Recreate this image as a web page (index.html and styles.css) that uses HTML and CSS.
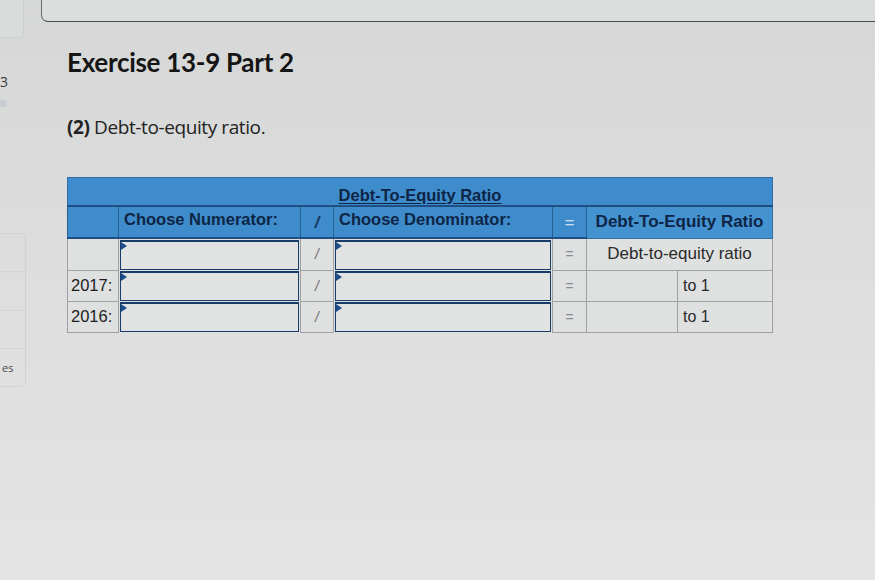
FILE: index.html
```html
<!DOCTYPE html>
<html>
<head>
<meta charset="utf-8">
<link rel="stylesheet" href="styles.css">
</head>
<body>
<div class="page">
  <aside class="sidebar">
    <div class="side-card-top"></div>
    <div class="side-num">3</div>
    <div class="side-pill"></div>
    <div class="side-card">
      <div class="side-row"></div>
      <div class="side-row"></div>
      <div class="side-row"></div>
      <div class="side-row last"><span>es</span></div>
    </div>
  </aside>
  <main class="main">
    <div class="topbox"></div>
    <div class="content">
      <h1 class="title">Exercise 13-9 Part 2</h1>
      <p class="question"><b>(2)</b> Debt-to-equity ratio.</p>
      <table class="ratio">
        <colgroup>
          <col class="c-label"><col class="c-num"><col class="c-slash"><col class="c-den"><col class="c-eq"><col class="c-res1"><col class="c-res2">
        </colgroup>
        <tr class="h1">
          <th colspan="7"><span class="ul">Debt-To-Equity Ratio</span></th>
        </tr>
        <tr class="h2">
          <th class="blank"></th>
          <th class="left">Choose Numerator:</th>
          <th class="op">/</th>
          <th class="left">Choose Denominator:</th>
          <th class="op eq">=</th>
          <th colspan="2" class="res-head">Debt-To-Equity Ratio</th>
        </tr>
        <tr class="row">
          <td class="label"></td>
          <td class="in"><div class="box"></div></td>
          <td class="op">/</td>
          <td class="in"><div class="box"></div></td>
          <td class="op eq">=</td>
          <td colspan="2" class="res-text">Debt-to-equity ratio</td>
        </tr>
        <tr class="row">
          <td class="label">2017:</td>
          <td class="in"><div class="box"></div></td>
          <td class="op">/</td>
          <td class="in"><div class="box"></div></td>
          <td class="op eq">=</td>
          <td class="res1"></td>
          <td class="res2">to 1</td>
        </tr>
        <tr class="row">
          <td class="label">2016:</td>
          <td class="in"><div class="box"></div></td>
          <td class="op">/</td>
          <td class="in"><div class="box"></div></td>
          <td class="op eq">=</td>
          <td class="res1"></td>
          <td class="res2">to 1</td>
        </tr>
      </table>
    </div>
  </main>
</div>
</body>
</html>
```

FILE: styles.css
```css
html, body {
  margin: 0;
  padding: 0;
}
body {
  width: 875px;
  height: 580px;
  overflow: hidden;
  background: linear-gradient(180deg, #d6d8d7 0%, #dcdddc 45%, #e3e4e3 100%);
  font-family: "Liberation Sans", Arial, sans-serif;
  color: #1c1c1c;
}
.page {
  display: flex;
  height: 580px;
}
.sidebar {
  width: 26px;
  flex: none;
  overflow: hidden;
  display: flex;
  flex-direction: column;
}
.side-card-top {
  width: 28px;
  height: 40px;
  margin-left: -6px;
  margin-top: -4px;
  border: 1px solid #cfd1d0;
  border-radius: 5px;
  background: #dadcdb;
}
.side-num {
  margin-top: 36px;
  margin-left: 0;
  font-family: "Open Sans", sans-serif;
  font-size: 14px;
  color: #3a3a3a;
  line-height: 16px;
}
.side-pill {
  margin-top: 10px;
  width: 10px;
  height: 7px;
  margin-left: -3px;
  border-radius: 4px;
  background: #c8ccd0;
}
.side-card {
  margin-top: 126px;
  margin-left: -6px;
  width: 30px;
  height: 152px;
  border: 1px solid #d0d2d1;
  border-radius: 5px;
  display: flex;
  flex-direction: column;
}
.side-row {
  flex: 1;
  border-bottom: 1px solid #d3d5d4;
}
.side-row.last {
  border-bottom: none;
  display: flex;
  align-items: center;
  font-family: "Open Sans", sans-serif;
  font-size: 11px;
  color: #4a4a4a;
  padding-left: 7px;
}
.main {
  flex: 1;
  padding-left: 15px;
  min-width: 0;
}
.topbox {
  height: 23px;
  margin-top: -2px;
  margin-right: -20px;
  border-left: 1.5px solid #6a6c6c;
  border-bottom: 1.5px solid #4c4e4e;
  border-bottom-left-radius: 7px;
  background: #dcdedd;
}
.content {
  padding-left: 26px;
}
.title {
  margin: 25px 0 0 0;
  font-family: Lato, "Open Sans", sans-serif;
  font-weight: 700;
  font-size: 26px;
  line-height: 30px;
  color: #151515;
  letter-spacing: -0.3px;
}
.question {
  margin: 38px 0 0 0;
  font-family: "Open Sans", sans-serif;
  font-size: 19px;
  line-height: 24px;
  color: #222;
  letter-spacing: -0.4px;
}
.question b {
  font-weight: 700;
}
.ratio {
  margin-top: 38px;
  border-collapse: collapse;
  table-layout: fixed;
  width: 705px;
  font-size: 16px;
}
.c-label { width: 51px; }
.c-num { width: 182px; }
.c-slash { width: 33px; }
.c-den { width: 219px; }
.c-eq { width: 34px; }
.c-res1 { width: 91px; }
.c-res2 { width: 95px; }

.ratio th {
  background: #3e8ccc;
  color: #0e2545;
  font-weight: 700;
  padding: 0;
}
.h1 th {
  height: 27px;
  text-align: center;
  border: 1px solid #2f6fa8;
  border-bottom: 2px solid #1f4f82;
  vertical-align: bottom;
  padding-bottom: 0;
}
.ul {
  text-decoration: underline;
  text-underline-offset: 2px;
  font-size: 16.5px;
}
.h2 th {
  height: 27px;
  border: 1px solid #2a5f93;
  border-bottom: 2px solid #1f4f82;
  font-size: 16.5px;
}
.h2 th.left {
  text-align: left;
  padding-left: 5px;
  vertical-align: top;
  padding-top: 3px;
}
.h2 th.blank {
  border-right: 1px solid #2a5f93;
}
.h2 th.op {
  text-align: center;
  font-style: italic;
  color: #17345a;
}
.h2 th.op.eq {
  font-style: normal;
  color: #cfe3f3;
  font-weight: 400;
}
.h2 th.res-head {
  text-align: center;
  background: #4592d1;
  border: 1.5px solid #3a6e9e;
  font-size: 17px;
}
.row td {
  height: 30px;
  padding: 0;
  background: #dfe0e0;
  border: 1px solid #9ea2a4;
  color: #1d1d1d;
}
.row td.label {
  padding-left: 3px;
  font-size: 16.5px;
  vertical-align: middle;
}
.row td.in {
  padding: 0 1px;
  border: none;
  border-left: 1px solid #6e7477;
  vertical-align: top;
}
.box {
  position: relative;
  height: 27px;
  margin-top: 1px;
  border-top: 2px solid #183c68;
  border-left: 1px solid #183c68;
  border-right: 1px solid #183c68;
  border-bottom: 1.5px solid #183c68;
  background: #e1e2e2;
}
.box::before {
  content: "";
  position: absolute;
  left: 0;
  top: 0;
  border-top: 4px solid transparent;
  border-bottom: 4px solid transparent;
  border-left: 6px solid #1d4e8a;
}
.row td.op {
  text-align: center;
  font-style: italic;
  color: #6c6f71;
  font-size: 14px;
}
.row td.op.eq {
  font-style: normal;
  color: #8a8d8f;
}
.row td.res-text {
  text-align: center;
  font-size: 17px;
  color: #2a2a2a;
}
.row td.res2 {
  padding-left: 5px;
  font-size: 16px;
  color: #2a2a2a;
}
```
